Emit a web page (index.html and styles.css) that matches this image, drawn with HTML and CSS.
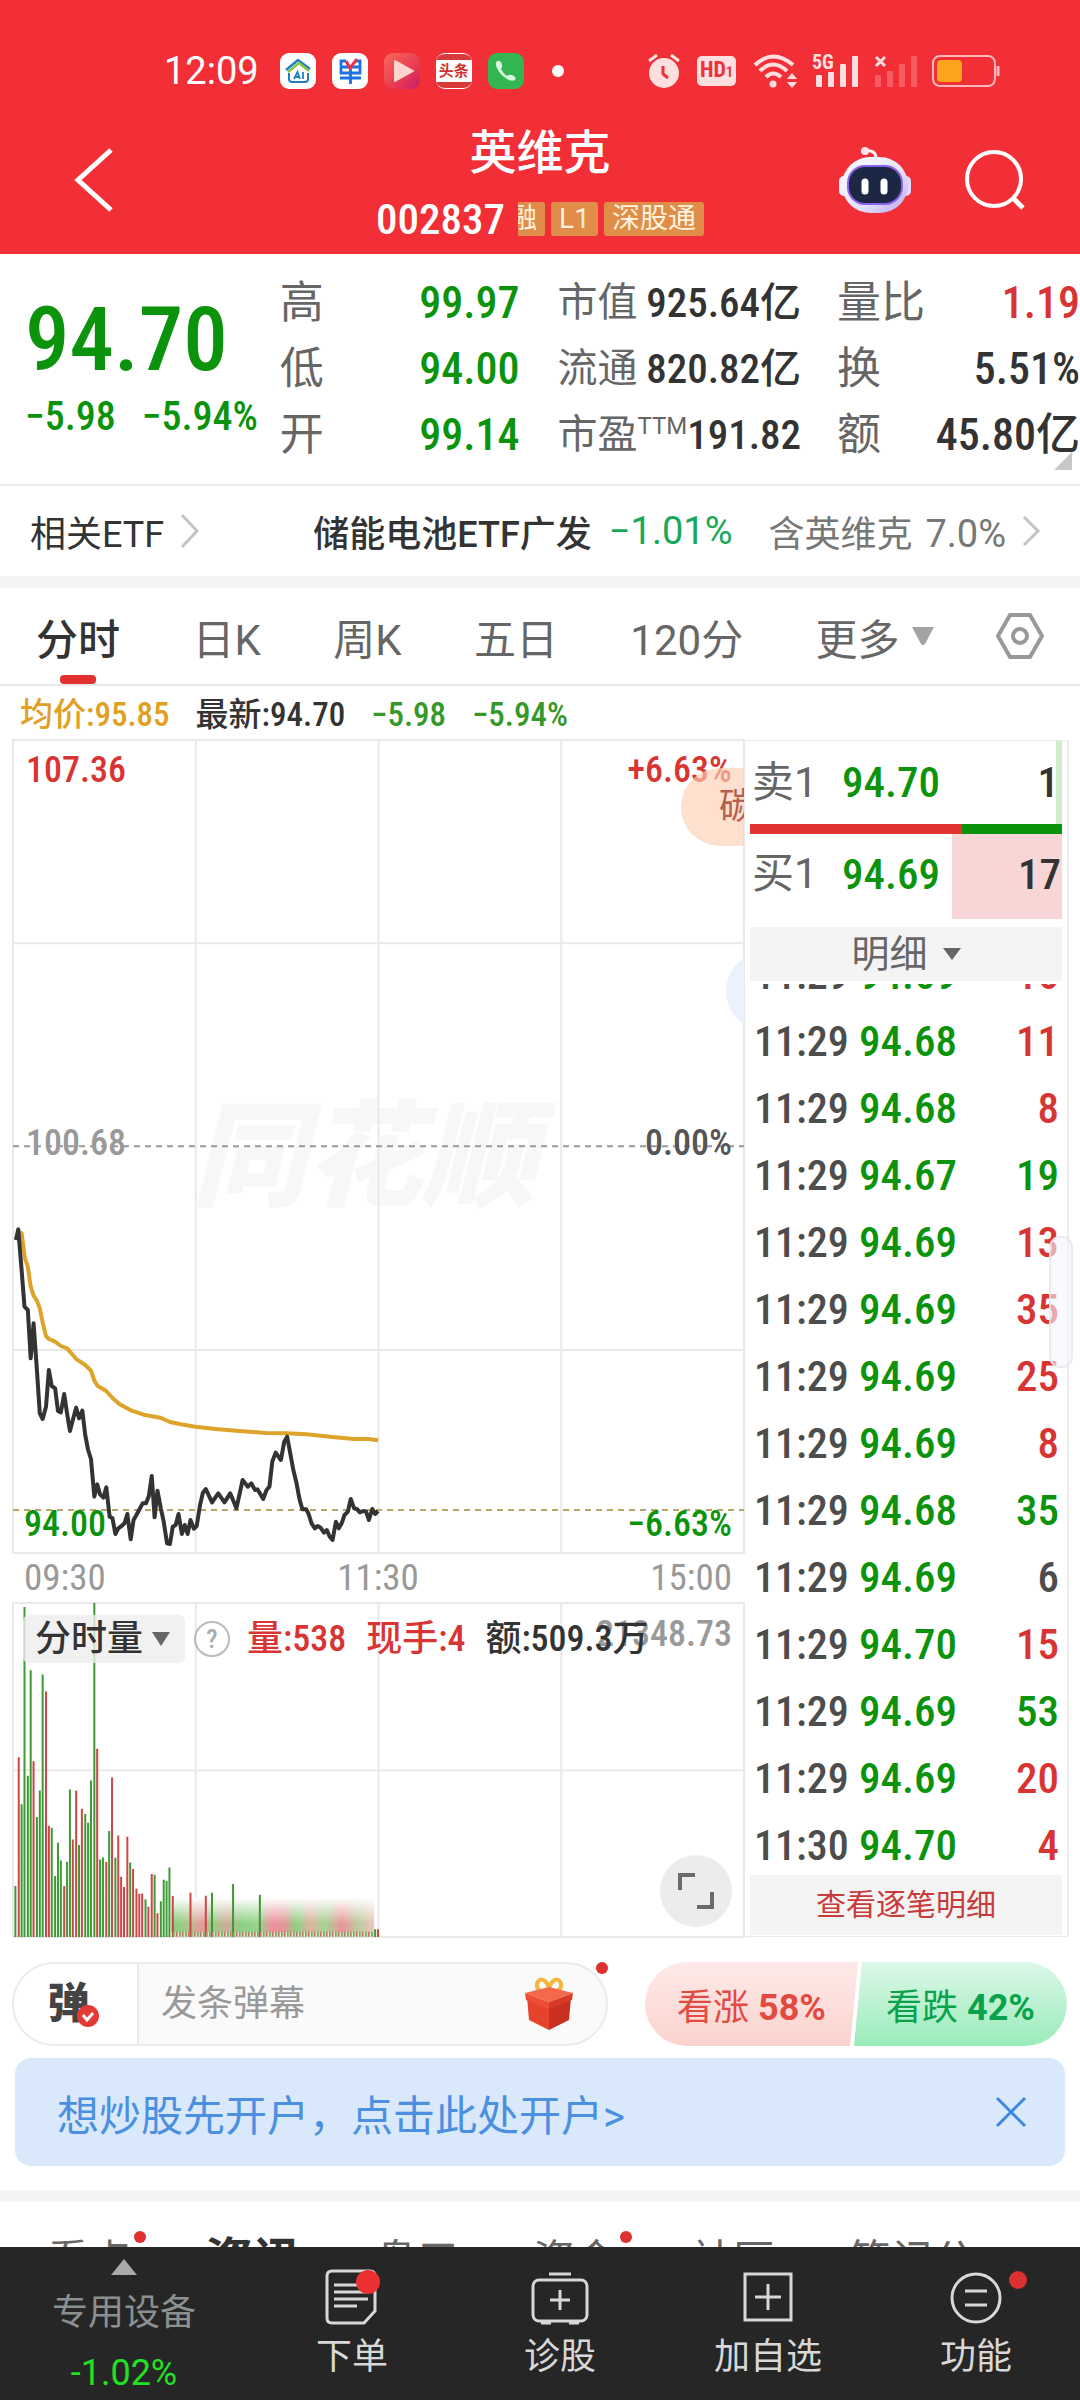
FILE: index.html
```html
<!DOCTYPE html>
<html lang="zh-CN">
<head>
<meta charset="utf-8">
<meta name="viewport" content="width=device-width, initial-scale=1">
<title>英维克 002837</title>
<link rel="stylesheet" href="styles.css">
</head>
<body>
<div class="app">
  <header class="top">
    <div class="status">
      <div class="status-left">
        <span class="clock">12:09</span>
        <svg class="app-icon" viewBox="0 0 36 36"><rect width="36" height="36" rx="9" fill="#fff"/><path d="M6 17L18 7L30 16" fill="none" stroke="#1f7fc4" stroke-width="2.4"/><path d="M8 19L19 10L29 18" fill="none" stroke="#8bc53f" stroke-width="2.4"/><path d="M9 20V26Q9 29 12 29H25Q28 29 28 26V20" fill="none" stroke="#1f7fc4" stroke-width="2"/><path d="M14 26L17.500 19L20 26M15.500 24H19M23 19V26" fill="none" stroke="#1f7fc4" stroke-width="1.800"/></svg>
        <svg class="app-icon" viewBox="0 0 36 36"><rect width="36" height="36" rx="9" fill="#fff"/><path d="M14 8H9V20H28V8H24M9 14H28M18.500 16V31M8 25H29" fill="none" stroke="#1b72e0" stroke-width="2.800"/><path d="M14 8L18 15L25 6" fill="none" stroke="#e8324a" stroke-width="3"/></svg>
        <svg class="app-icon" viewBox="0 0 36 36"><defs><linearGradient id="play" x1="0" y1="0" x2="1" y2="1"><stop offset="0" stop-color="#f9695a"/><stop offset=".6" stop-color="#ea3a52"/><stop offset="1" stop-color="#c41c6c"/></linearGradient></defs><rect width="36" height="36" rx="9" fill="url(#play)"/><path d="M11 8L29 18L11 28Z" fill="#fcd6cc" stroke="#fcd6cc" stroke-width="2" stroke-linejoin="round"/></svg>
        <span class="app-icon news"><b>头条</b></span>
        <svg class="app-icon" viewBox="0 0 36 36"><rect width="36" height="36" rx="9" fill="#34b553"/><path d="M9 8Q13 7 14 12Q14.500 14 13 16Q15 20 19 23Q21 21 24 22Q29 24 27 27Q24 29 19 26Q11 21 8.500 14Q7 10 9 8Z" fill="#d8f5de"/></svg>
        <i class="more-dot"></i>
      </div>
      <div class="status-right">
        <svg width="32" height="36" viewBox="0 0 32 36"><circle cx="16" cy="20" r="15" fill="#fddfe0"/><path d="M1 8L9 2M31 8L23 2" stroke="#fddfe0" stroke-width="3"/><path d="M15 13V21L20 25" fill="none" stroke="#f03038" stroke-width="3"/></svg>
        <span class="hd">HD<small>1</small></span>
        <svg width="46" height="36" viewBox="0 0 46 36"><g fill="none" stroke="#fddfe0" stroke-width="4"><path d="M2 12Q20-5 40 12"/><path d="M7 18Q20 5 34 18"/><path d="M13 24Q20 17 28 24"/></g><circle cx="20" cy="31" r="3.500" fill="#fddfe0"/><path d="M34 26L39 20L44 26ZM34 29L39 35L44 29Z" fill="#fddfe0"/></svg>
        <svg width="48" height="34" viewBox="0 0 48 34"><g fill="#fddfe0"><rect x="4" y="21" width="6" height="12" rx="1"/><rect x="16" y="18" width="6" height="15" rx="1"/><rect x="28" y="10" width="6" height="23" rx="1"/><rect x="40" y="2" width="6" height="31" rx="1"/></g><text x="0" y="15" class="net">5G</text></svg>
        <svg width="46" height="34" viewBox="0 0 46 34"><g fill="#f65c62"><rect x="2" y="21" width="6" height="12" rx="1"/><rect x="14" y="17" width="6" height="16" rx="1"/><rect x="26" y="10" width="6" height="23" rx="1"/><rect x="38" y="2" width="6" height="31" rx="1"/></g><path d="M3 3L12 12M12 3L3 12" stroke="#fddfe0" stroke-width="3"/></svg>
        <svg width="68" height="32" viewBox="0 0 68 32"><rect x="1" y="1" width="62" height="30" rx="7" fill="none" stroke="#fbb9bc" stroke-width="2"/><rect x="5" y="5" width="25" height="22" rx="4" fill="#fba41c"/><path d="M66 11V21" stroke="#fbb9bc" stroke-width="3"/></svg>
      </div>
    </div>
    <div class="title-bar">
      <button class="icon-btn back" aria-label="返回"><svg width="40" height="64" viewBox="0 0 40 64"><path d="M37 2L4 32L37 62" fill="none" stroke="#fff" stroke-width="5"/></svg></button>
      <div class="title">
        <h1>英维克</h1>
        <div class="code-row"><span class="code">002837</span><div class="tags"><span class="tag tag-cut">融</span><span class="tag">L1</span><span class="tag">深股通</span></div></div>
      </div>
      <div class="title-actions">
        <button class="icon-btn" aria-label="智能助手"><svg width="74" height="70" viewBox="0 0 74 70"><defs><linearGradient id="bot" x1="0" y1="0" x2="1" y2="1"><stop offset="0" stop-color="#fff"/><stop offset=".6" stop-color="#e4e2fb"/><stop offset="1" stop-color="#b9a4f4"/></linearGradient></defs><path d="M27 6Q38 4 38 14" fill="none" stroke="#fff" stroke-width="3"/><circle cx="27" cy="6" r="4" fill="#fde4ec"/><rect x="1" y="31" width="10" height="20" rx="5" fill="#f3f0ff"/><rect x="63" y="31" width="10" height="20" rx="5" fill="#e2d8ff"/><rect x="4" y="12" width="66" height="56" rx="28" fill="url(#bot)"/><rect x="10" y="21" width="54" height="38" rx="17" fill="#1c2744" stroke="#8a62ee" stroke-width="2"/><path d="M27 37V46M46 37V46" stroke="#fff" stroke-width="7" stroke-linecap="round"/></svg></button>
        <button class="icon-btn" aria-label="搜索"><svg width="62" height="62" viewBox="0 0 62 62"><circle cx="30" cy="30" r="27" fill="none" stroke="#fff" stroke-width="4"/><path d="M48 48L59 59" stroke="#fff" stroke-width="5"/></svg></button>
      </div>
    </div>
  </header>

  <main class="content">
    <section class="quote">
      <div class="price">
        <strong class="num down">94.70</strong>
        <div class="change num down"><span>−5.98</span><span>−5.94%</span></div>
      </div>
      <dl class="stats first">
        <div><dt>高</dt><dd class="down">99.97</dd></div>
        <div><dt>低</dt><dd class="down">94.00</dd></div>
        <div><dt>开</dt><dd class="down">99.14</dd></div>
      </dl>
      <dl class="stats compact">
        <div><dt>市值</dt><dd>925.64亿</dd></div>
        <div><dt>流通</dt><dd>820.82亿</dd></div>
        <div><dt>市盈<sup>TTM</sup></dt><dd>191.82</dd></div>
      </dl>
      <dl class="stats last">
        <div><dt>量比</dt><dd class="up">1.19</dd></div>
        <div><dt>换</dt><dd>5.51%</dd></div>
        <div><dt>额</dt><dd>45.80亿</dd></div>
      </dl>
      <svg class="corner" width="18" height="18" viewBox="0 0 18 18"><path d="M18 0V18H0Z" fill="#c8c8c8"/></svg>
    </section>

    <nav class="etf">
      <a href="#etf">相关ETF<svg width="20" height="36" viewBox="0 0 20 36"><path d="M2 2L17 18L2 34" fill="none" stroke="#c4c4c4" stroke-width="3"/></svg></a>
      <a href="#fund"><span class="fund">储能电池ETF广发</span><span class="etf-pct">−1.01%</span><span class="etf-hold">含英维克 <span>7.0%</span></span><svg width="20" height="32" viewBox="0 0 20 32"><path d="M2 2L16 16L2 30" fill="none" stroke="#c4c4c4" stroke-width="3"/></svg></a>
    </nav>

    <div class="band"></div>

    <nav class="periods">
      <button class="active">分时</button>
      <button>日K</button>
      <button>周K</button>
      <button>五日</button>
      <button>120分</button>
      <button>更多<svg width="22" height="18" viewBox="0 0 22 18"><path d="M0 0H22L13 17Q11 19 9 17Z" fill="#a3a3a3"/></svg></button>
      <button class="settings" aria-label="图表设置"><svg width="48" height="48" viewBox="0 0 48 48"><path d="M14 3H34L46 24L34 45H14L2 24Z" fill="none" stroke="#999" stroke-width="4" stroke-linejoin="round"/><circle cx="24" cy="24" r="7" fill="none" stroke="#999" stroke-width="4"/></svg></button>
    </nav>

    <div class="legend num"><span class="avg">均价:95.85</span><span>最新:94.70</span><span class="fall">−5.98</span><span class="fall">−5.94%</span></div>

    <section class="board">
      <div class="charts">
        <div class="price-chart">
          <span class="watermark">同花顺</span>
          <svg class="plot" viewBox="27 -1200 1528 2439" preserveAspectRatio="none">
            <path class="grid" d="M27-1200H1555V1239H27ZM409-1200V1239M791-1200V1239M1173-1200V1239M27-590H1555M27 630H1555"/>
            <path class="dash" d="M27 19H1555"/>
            <path class="dash low" d="M27 1110H1555"/>
            <polyline class="line-avg" points="38,275 45,280 52,355 58,380 64,440 70,467 77,482 83,505 89,548 96,588 102,597 115,605 127,618 140,625 152,645 160,658 178,675 190,692 197,722 204,738 222,753 235,774 250,793 275,812 300,824 335,833 355,846 375,852 408,860 450,867 500,873 555,879 600,880 640,883 700,892 740,897 770,897 790,901"/>
            <polyline class="line-price" points="33,300 38,268 45,390 51,500 58,510 64,655 70,550 77,690 83,820 89,837 96,800 102,690 108,738 115,745 121,813 127,817 134,762 140,820 146,873 152,840 159,803 165,835 172,812 178,885 184,930 190,957 197,1070 203,1033 209,1063 216,1073 222,1042 229,1130 235,1135 241,1182 247,1165 254,1158 260,1150 266,1122 273,1198 279,1140 285,1125 298,1090 305,1090 311,1068 317,1008 323,1132 329,1052 336,1105 342,1145 349,1210 355,1212 361,1160 367,1155 373,1122 380,1182 386,1155 392,1182 398,1140 405,1166 411,1158 418,1095 424,1058 430,1047 443,1087 456,1060 469,1087 481,1060 494,1105 507,1020 518,1040 525,1030 533,1050 538,1048 550,1077 557,1050 563,1040 569,965 576,938 587,960 594,905 600,890 613,990 619,1025 626,1078 632,1108 640,1108 645,1122 651,1150 658,1165 664,1158 670,1163 677,1178 683,1170 689,1190 695,1200 702,1145 708,1165 714,1150 720,1125 727,1115 733,1077 740,1105 746,1107 752,1117 759,1113 765,1115 771,1140 778,1107 784,1122 790,1113"/>
          </svg>
          <span class="lab top-l up">107.36</span>
          <span class="lab top-r up">+6.63%</span>
          <span class="lab mid-l">100.68</span>
          <span class="lab mid-r">0.00%</span>
          <span class="lab bot-l down">94.00</span>
          <span class="lab bot-r down">−6.63%</span>
          <div class="barrage"><span class="bubble">碳</span><span class="bubble blue"></span></div>
        </div>
        <div class="axis"><span>09:30</span><span>11:30</span><span>15:00</span></div>
        <div class="volume-chart">
          <svg class="plot" viewBox="27 68 1528 1003" preserveAspectRatio="none">
            <defs>
              <linearGradient id="haze" x1="0" x2="1" y1="0" y2="0"><stop offset="0" stop-color="#7fd27a"/><stop offset=".08" stop-color="#a9c68c"/><stop offset=".15" stop-color="#ec9898"/><stop offset=".2" stop-color="#96ce8a"/><stop offset=".28" stop-color="#d3aa98"/><stop offset=".34" stop-color="#8ad082"/><stop offset=".42" stop-color="#98d48e"/><stop offset=".5" stop-color="#f090a0"/><stop offset=".56" stop-color="#e09898"/><stop offset=".62" stop-color="#8cd484"/><stop offset=".68" stop-color="#e0b0a0"/><stop offset=".76" stop-color="#a4d494"/><stop offset=".84" stop-color="#ee949c"/><stop offset=".92" stop-color="#bccc9c"/><stop offset="1" stop-color="#f0c4c0"/></linearGradient>
              <linearGradient id="fade" x1="0" x2="0" y1="0" y2="1"><stop offset="0" stop-color="#fff"/><stop offset=".75" stop-color="#fff" stop-opacity="0"/></linearGradient>
            </defs>
            <path class="grid" d="M27 68H1555V1071H27ZM409 68V1071M791 68V1071M1173 68V1071M27 570H1555"/>
            <g><rect x="358" y="955" width="424" height="101" fill="url(#haze)"/><rect x="357" y="953" width="426" height="103" fill="url(#fade)"/></g>
            <path class="bar-down" d="M32 1071V918M45 1071V672M51 1071V80M58 1071V587M64 1071V270M77 1071V711M83 1071V631M89 1071V283M108 1071V743M115 1071V888M121 1071V788M127 1071V841M140 1071V845M146 1071V628M165 1071V795M178 1071V702M184 1071V728M190 1071V601M197 1071V68M209 1071V838M215 1071V832M228 1071V753M241 1071V833M272 1071V847M304 1071V958M323 1071V884M336 1071V964M342 1071V899M348 1071V903M354 1071V862M443 1071V938M487 1071V912M543 1071V944M784 1071V1048"/>
            <path class="bar-up" d="M39 1071V531M70 1071V543M96 1071V334M102 1071V737M134 1071V918M152 1071V778M159 1071V631M171 1071V686M203 1071V506M222 1071V846M234 1071V592M247 1071V766M253 1071V890M259 1071V921M266 1071V770M278 1071V867M285 1071V926M291 1071V941M297 1071V940M310 1071V980M317 1071V882M329 1071V1000M361 1071V948M398 1071V938M430 1071V947M790 1071V1048"/>
            <path class="base-down" d="M361 1063H782"/>
            <path class="base-up" d="M367 1063H782"/>
          </svg>
          <span class="lab vol-max">21348.73</span>
          <div class="vol-head num">
            <button class="vol-pick">分时量<svg width="18" height="14" viewBox="0 0 18 14"><path d="M0 0H18L9 14Z" fill="#666"/></svg></button>
            <button class="help" aria-label="说明">?</button>
            <span class="up">量:538</span><span class="up">现手:4</span><span>额:509.3万</span>
          </div>
          <button class="expand" aria-label="全屏"><svg width="40" height="40" viewBox="0 0 40 40"><path d="M4 19V4H19M36 21V36H21" fill="none" stroke="#6a6a6a" stroke-width="4"/></svg></button>
        </div>
      </div>

      <aside class="book">
        <div class="order sell"><span class="side">卖1</span><span class="down">94.70</span><span class="qty">1</span></div>
        <div class="ratio"><i></i></div>
        <div class="order buy"><span class="side">买1</span><span class="down">94.69</span><span class="qty">17</span></div>
        <button class="detail">明细<svg width="18" height="12" viewBox="0 0 18 12"><path d="M0 0H18L9 12Z" fill="#666"/></svg></button>
        <div class="ticks">
          <table>
            <tr><td>11:29</td><td>94.69</td><td class="up">16</td></tr>
            <tr><td>11:29</td><td>94.68</td><td class="up">11</td></tr>
            <tr><td>11:29</td><td>94.68</td><td class="up">8</td></tr>
            <tr><td>11:29</td><td>94.67</td><td class="down">19</td></tr>
            <tr><td>11:29</td><td>94.69</td><td class="up">13</td></tr>
            <tr><td>11:29</td><td>94.69</td><td class="up">35</td></tr>
            <tr><td>11:29</td><td>94.69</td><td class="up">25</td></tr>
            <tr><td>11:29</td><td>94.69</td><td class="up">8</td></tr>
            <tr><td>11:29</td><td>94.68</td><td class="down">35</td></tr>
            <tr><td>11:29</td><td>94.69</td><td>6</td></tr>
            <tr><td>11:29</td><td>94.70</td><td class="up">15</td></tr>
            <tr><td>11:29</td><td>94.69</td><td class="down">53</td></tr>
            <tr><td>11:29</td><td>94.69</td><td class="up">20</td></tr>
            <tr><td>11:30</td><td>94.70</td><td class="up">4</td></tr>
          </table>
        </div>
        <button class="all-ticks">查看逐笔明细</button>
        <i class="handle"></i>
      </aside>
    </section>

    <section class="social">
      <div class="danmu">
        <button class="danmu-toggle" aria-label="弹幕开关">弹<svg width="24" height="24" viewBox="0 0 24 24"><circle cx="12" cy="12" r="11" fill="#e33b33"/><path d="M7 11L11 16L17 9" fill="none" stroke="#fff" stroke-width="3"/></svg></button>
        <input type="text" placeholder="发条弹幕" aria-label="发条弹幕">
        <button class="icon-btn gift" aria-label="礼物"><svg width="50" height="54" viewBox="0 0 50 54"><path d="M25 14Q12 16 13 7Q15 0 21 4Q25 8 25 14Q25 8 29 4Q35 0 37 7Q38 16 25 14Z" fill="none" stroke="#f5b63c" stroke-width="4"/><path d="M3 20L25 27V53L5 43Z" fill="#e5432c"/><path d="M47 20L25 27V53L45 43Z" fill="#c9301f"/><path d="M1 16L25 10L49 16L25 25Z" fill="#f4694c"/><path d="M1 16L25 25V32L2 23Z" fill="#ee4c34"/><path d="M49 16L25 25V32L48 23Z" fill="#d93a27"/></svg></button>
        <i class="dot"></i>
      </div>
      <div class="vote">
        <button class="vote-up">看涨 <b>58%</b></button>
        <button class="vote-down">看跌 <b>42%</b></button>
      </div>
    </section>

    <div class="banner">
      <a href="#open">想炒股先开户，点击此处开户&gt;</a>
      <button class="icon-btn" aria-label="关闭"><svg width="32" height="32" viewBox="0 0 32 32"><path d="M2 2L30 30M30 2L2 30" stroke="#3f86e0" stroke-width="3"/></svg></button>
    </div>

    <div class="band"></div>

    <nav class="sections">
      <a href="#s1">看点<i class="dot"></i></a>
      <a href="#s2" class="active">资讯</a>
      <a href="#s3">盘口</a>
      <a href="#s4">资金<i class="dot"></i></a>
      <a href="#s5">社区</a>
      <a href="#s6">笔记公</a>
      <svg width="16" height="30" viewBox="0 0 16 30"><path d="M2 2L14 15L2 28" fill="none" stroke="#bbb" stroke-width="3"/></svg>
    </nav>
  </main>

  <nav class="tabbar">
    <a href="#sector" class="sector"><svg width="26" height="16" viewBox="0 0 26 16"><path d="M13 0L26 16H0Z" fill="#aaa"/></svg><span>专用设备</span><em>-1.02%</em></a>
    <a href="#trade"><svg width="56" height="56" viewBox="0 0 56 56"><path d="M8 2H46Q51 2 51 7V42L40 54H8Q3 54 3 49V7Q3 2 8 2Z" fill="none" stroke="#d8d8d8" stroke-width="3"/><path d="M10 16H34M10 23H44M10 30H44M10 37H33" stroke="#d8d8d8" stroke-width="3"/><circle cx="44" cy="13" r="12" fill="#ea3030"/></svg><span>下单</span></a>
    <a href="#diagnose"><svg width="60" height="56" viewBox="0 0 60 56"><rect x="3" y="11" width="54" height="41" rx="6" fill="none" stroke="#d8d8d8" stroke-width="3"/><path d="M19 5H41M11 54H21M39 54H49M20 31H40M30 21V41" stroke="#d8d8d8" stroke-width="3"/></svg><span>诊股</span></a>
    <a href="#watch"><svg width="52" height="56" viewBox="0 0 52 56"><rect x="3" y="5" width="46" height="46" fill="none" stroke="#d8d8d8" stroke-width="3"/><path d="M13 28H39M26 15V41" stroke="#d8d8d8" stroke-width="3"/></svg><span>加自选</span></a>
    <a href="#more"><svg width="54" height="56" viewBox="0 0 54 56"><circle cx="27" cy="29" r="24" fill="none" stroke="#d8d8d8" stroke-width="3"/><path d="M16 22H38M16 36H38" stroke="#d8d8d8" stroke-width="3"/></svg><span>功能</span><i class="dot"></i></a>
  </nav>
</div>
</body>
</html>
```
FILE: styles.css
```css
:root {
  --sans: Roboto, "Noto Sans CJK SC", sans-serif;
  --num: "Roboto Condensed", Roboto, "Noto Sans CJK SC", sans-serif;
  --red: #d93434;
  --green: #0c930c;
  --ink: #333;
  --grey: #666;
}

* { box-sizing: border-box; }

body {
  margin: 0;
  font-family: var(--sans);
  color: var(--ink);
  background: #fff;
}

button, input { font: inherit; color: inherit; border: 0; padding: 0; margin: 0; background: none; }
a { color: inherit; text-decoration: none; }
svg { display: block; flex: none; }
i, em { font-style: normal; }
dl, dd, h1 { margin: 0; }

.num { font-family: var(--num); font-weight: 500; }
.up { color: var(--red); }
.down { color: var(--green); }
.icon-btn { display: flex; }
.dot { position: absolute; width: 12px; height: 12px; border-radius: 50%; background: #dd3030; }

.app { display: flex; flex-direction: column; height: 100vh; }
.content { flex: 1; min-height: 0; overflow: hidden; }

/* Header */
.top { background: #f22f37; color: #fff; }
.status { display: flex; justify-content: space-between; align-items: center; height: 115px; padding: 27px 80px 0 164px; }
.status-left { display: flex; align-items: center; gap: 16px; }
.clock { font: 400 38px/44px var(--sans); margin-right: 5px; }
.app-icon { width: 36px; height: 36px; }
.news { display: flex; align-items: center; border-radius: 9px; overflow: hidden; background: #d83a3a; border-top: 1px solid #fff; border-bottom: 1px solid #fff; }
.news b { flex: 1; background: #fff; color: #d22f2f; font-size: 15px; line-height: 22px; text-align: center; font-weight: 700; }
.more-dot { width: 12px; height: 12px; border-radius: 50%; background: #fff; margin-left: 12px; }
.status-right { display: flex; align-items: center; gap: 13px; }
.hd { background: #fddfe0; color: #e8343c; border-radius: 5px; font: 700 22px/28px var(--num); padding: 0 3px; margin: 0 4px; }
.hd small { font-size: 14px; }
.net { font: 700 20px var(--num); fill: #fddfe0; }

.title-bar { display: grid; grid-template-columns: 1fr auto 1fr; align-items: center; height: 139px; padding: 0 54px 9px; }
.title { display: flex; flex-direction: column; align-items: center; gap: 18px; }
.title h1 { font-size: 47px; line-height: 60px; font-weight: 500; }
.code-row { display: flex; align-items: center; gap: 13px; height: 36px; }
.code { font: 500 43px/36px var(--num); }
.tags { display: flex; gap: 6px; }
.tag { display: flex; height: 34px; align-items: center; padding: 0 8px; border-radius: 3px; background: #e08d49; color: #fff3dd; font-size: 28px; line-height: 34px; }
.tag-cut { width: 27px; justify-content: flex-end; overflow: hidden; border-radius: 0 3px 3px 0; }
.title-actions { display: flex; justify-content: flex-end; align-items: center; gap: 52px; }
.back { justify-self: start; margin-left: 20px; }

/* Quote */
.quote { position: relative; display: grid; grid-template-columns: 281fr 279fr 276fr 244fr; padding: 16px 0; border-bottom: 2px solid #ebebeb; }
.price { padding: 24px 0 0 25px; display: flex; flex-direction: column; gap: 11px; }
.price strong { font-size: 89px; line-height: 92px; font-weight: 500; }
.change { display: flex; gap: 26px; font-size: 40px; line-height: 40px; white-space: nowrap; }
.stats { padding-right: 36px; }
.stats > div { display: flex; justify-content: space-between; align-items: center; height: 66px; white-space: nowrap; }
.stats dt { font-size: 44px; line-height: 66px; color: var(--grey); }
.stats dd { font: 500 44px/66px var(--num); }
.first { padding-right: 38px; }
.compact dt { font-size: 40px; }
.compact dd { font-size: 41px; }
.compact sup { font: 24px/24px var(--sans); vertical-align: 14px; }
.last { padding-right: 0; }
.corner { position: absolute; right: 8px; bottom: 14px; }

/* Related funds */
.etf { display: flex; justify-content: space-between; align-items: center; height: 90px; padding: 0 38px 0 30px; font-size: 36px; }
.etf a { display: flex; align-items: center; white-space: nowrap; }
.etf a svg { margin-left: 16px; }
.fund { font-weight: 500; }
.etf-pct { font-size: 38px; color: #17a858; margin: 0 36px 0 17px; }
.etf-hold { color: #777; }
.etf-hold span { font-size: 38px; margin-left: 4px; }
.band { height: 12px; background: #f4f4f4; }

/* Period tabs */
.periods { display: flex; justify-content: space-between; align-items: stretch; height: 98px; padding: 0 36px; border-bottom: 2px solid #e8e8e8; }
.periods button { position: relative; display: flex; align-items: center; gap: 12px; font-size: 42px; color: var(--grey); }
.periods .active { color: var(--ink); font-weight: 500; }
.periods .active::after { content: ""; position: absolute; left: 50%; bottom: 0; width: 36px; height: 9px; margin-left: -18px; border-radius: 4px; background: #e22f2f; }
.periods .settings { margin-left: -10px; }

.legend { display: flex; align-items: center; gap: 26px; height: 54px; padding: 4px 20px 0; font-size: 33px; line-height: 50px; white-space: nowrap; }
.avg { color: #e0a024; }
.fall { color: #36982a; }

/* Charts */
.board { display: grid; grid-template-columns: 731fr 325fr; padding: 0 11px 0 13px; }
.price-chart { position: relative; height: 813px; }
.plot { position: absolute; inset: 0; width: 100%; height: 100%; overflow: visible; }
.plot path, .plot polyline { fill: none; vector-effect: non-scaling-stroke; }
.plot .grid { stroke: #e9e9e9; stroke-width: 2; }
.plot .dash { stroke: #999; stroke-width: 2; stroke-dasharray: 6 5; }
.plot .low { stroke: #bba66a; }
.plot .line-price { stroke: #333; stroke-width: 4; stroke-linejoin: round; }
.plot .line-avg { stroke: #dea32a; stroke-width: 4; stroke-linejoin: round; }
.plot .bar-down { stroke: #3e9a34; stroke-width: 2; }
.plot .bar-up { stroke: #cf4646; stroke-width: 2; }
.plot .base-down { stroke: #62b356; stroke-width: 5; stroke-dasharray: 2 4; }
.plot .base-up { stroke: #d06a5e; stroke-width: 5; stroke-dasharray: 2 4; }

.lab { position: absolute; font: 500 36px/44px var(--num); white-space: nowrap; }
.top-l { left: 13px; top: 8px; }
.top-r { right: 12px; top: 8px; }
.mid-l { left: 13px; top: 381px; color: #999; }
.mid-r { right: 12px; top: 381px; color: #555; }
.bot-l { left: 11px; bottom: 7px; }
.bot-r { right: 12px; bottom: 7px; }
.watermark { position: absolute; left: 48%; top: 50%; transform: translate(-50%, -50%); font: italic 900 115px/120px "Noto Sans CJK SC", sans-serif; color: #f7f7f7; white-space: nowrap; }

.barrage { position: absolute; inset: 0; overflow: hidden; }
.bubble { position: absolute; left: calc(100% - 63px); top: 28px; width: 240px; height: 78px; padding-left: 38px; border-radius: 39px; background: rgba(252, 208, 178, .65); color: #b4604c; font-size: 36px; line-height: 78px; }
.bubble.blue { left: calc(100% - 18px); top: 212px; background: #ebf2fd; }

.axis { display: flex; justify-content: space-between; height: 50px; padding: 0 12px 0 11px; color: #999; font: 400 37px/50px var(--num); }

.volume-chart { position: relative; height: 334px; }
.vol-head { position: absolute; left: 10px; top: 12px; display: flex; align-items: center; font-size: 36px; line-height: 48px; white-space: nowrap; }
.vol-head span { margin-right: 20px; }
.vol-pick { display: flex; align-items: center; gap: 9px; height: 48px; padding: 0 15px 0 12px; border-radius: 6px; background: rgba(238, 238, 238, .8); }
.help { width: 36px; height: 36px; margin: 0 17px 0 9px; border: 2px solid #bbb; border-radius: 50%; color: #aaa; font-size: 26px; line-height: 32px; }
.vol-max { right: 12px; top: 9px; color: #999; }
.expand { position: absolute; right: 12px; bottom: 10px; width: 72px; height: 72px; display: flex; align-items: center; justify-content: center; border-radius: 50%; background: #ececec; }

/* Order book */
.book { position: relative; display: flex; flex-direction: column; height: 1197px; padding: 0 5px 1px 6px; border: solid #ebebeb; border-width: 1px 2px 1px 0; font: 500 43px/83px var(--num); }
.order { display: grid; grid-template-columns: 90px 1fr auto; padding-left: 2px; flex: none; height: 83px; }
.order .side { font: 400 42px/83px var(--sans); color: var(--grey); }
.order .qty { padding-right: 1px; }
.sell { border-right: 6px solid #cdebcd; }
.sell .qty { padding: 0; margin-right: -3px; }
.buy { height: 85px; line-height: 80px; background: linear-gradient(#f9d6d6, #f9d6d6) right / 110px 100% no-repeat; }
.buy .side { line-height: 80px; }
.ratio { flex: none; height: 10px; background: var(--green); }
.ratio i { display: block; width: 68%; height: 100%; background: #e23333; }
.detail { flex: none; display: flex; align-items: center; justify-content: center; gap: 15px; height: 54px; margin: 8px 0 3px; background: #f4f4f4; color: var(--grey); font: 400 38px/54px var(--sans); }
.ticks { flex: 1; min-height: 0; display: flex; flex-direction: column; justify-content: flex-end; overflow: hidden; }
.ticks table { width: 100%; margin-bottom: -4px; border-collapse: collapse; flex: none; }
.ticks td { height: 67px; padding: 0; line-height: 67px; color: #4d4d4d; }
.ticks td:nth-child(1) { width: 109px; padding-left: 4px; font-size: 42px; }
.ticks td:nth-child(2) { color: var(--green); }
.ticks td:nth-child(3) { text-align: right; padding-right: 3px; }
.ticks td.up { color: var(--red); }
.ticks td.down { color: var(--green); }
.all-ticks { flex: none; height: 60px; background: #f4f4f4; color: #c93a3a; font: 400 30px/60px var(--sans); }
.handle { position: absolute; right: -6px; top: 495px; width: 24px; height: 132px; border-radius: 11px; border: 2px solid rgba(228, 230, 236, .7); background: rgba(244, 247, 253, .6); }

/* Barrage input and vote */
.social { display: grid; grid-template-columns: minmax(0, 596fr) minmax(0, 422fr); gap: 37px; padding: 25px 13px 0 12px; }
.danmu { position: relative; display: flex; align-items: center; height: 84px; border: 2px solid #ebebeb; border-radius: 42px; background: #fafafa; font-size: 36px; }
.danmu-toggle { position: relative; width: 125px; height: 80px; flex: none; padding-right: 14px; border-right: 2px solid #ebebeb; border-radius: 40px 0 0 40px; background: #fff; font-size: 42px; font-weight: 900; line-height: 72px; color: #444; }
.danmu-toggle svg { position: absolute; left: 62px; bottom: 16px; }
.danmu input { flex: 1; min-width: 0; height: 80px; padding-left: 22px; }
.danmu input::placeholder { color: #999; opacity: 1; }
.gift { margin-right: 32px; }
.danmu .dot { right: -2px; top: -2px; }
.vote { display: flex; border-radius: 42px; overflow: hidden; font-size: 36px; }
.vote button { flex: 1; height: 84px; white-space: nowrap; }
.vote-up { background: linear-gradient(#fdeae8, #fbd3ce); color: #e24a42; clip-path: polygon(0 0, 100% 0, calc(100% - 8px) 100%, 0 100%); }
.vote .vote-down { margin-left: -4px; background: linear-gradient(#dcf8e8, #9aebba); color: #0aa24c; clip-path: polygon(8px 0, 100% 0, 100% 100%, 0 100%); }

.banner { display: flex; justify-content: space-between; align-items: center; height: 108px; margin: 12px 15px 24px; padding: 0 38px 0 42px; border-radius: 16px; background: #d9e8fa; color: #4a8fe0; font-size: 42px; }

.sections { display: flex; align-items: center; gap: 74px; height: 118px; padding: 0 47px; font-size: 42px; line-height: 60px; color: var(--grey); white-space: nowrap; }
.sections a { position: relative; }
.sections .active { font-size: 48px; font-weight: 700; color: var(--ink); }
.sections .dot { right: -15px; top: 0; }
.sections svg { margin-left: -32px; }

/* Bottom bar */
.tabbar { display: grid; grid-template-columns: 248fr 208fr 208fr 208fr 208fr; flex: none; height: 153px; background: #262626; color: #d8d8d8; font-size: 36px; }
.tabbar a { position: relative; display: flex; flex-direction: column; align-items: center; padding-top: 22px; gap: 10px; line-height: 44px; }
.tabbar .sector { padding-top: 12px; gap: 16px; color: #8b9090; }
.sector em { color: #22e022; }
.tabbar .dot { right: 53px; top: 24px; width: 18px; height: 18px; }
```
